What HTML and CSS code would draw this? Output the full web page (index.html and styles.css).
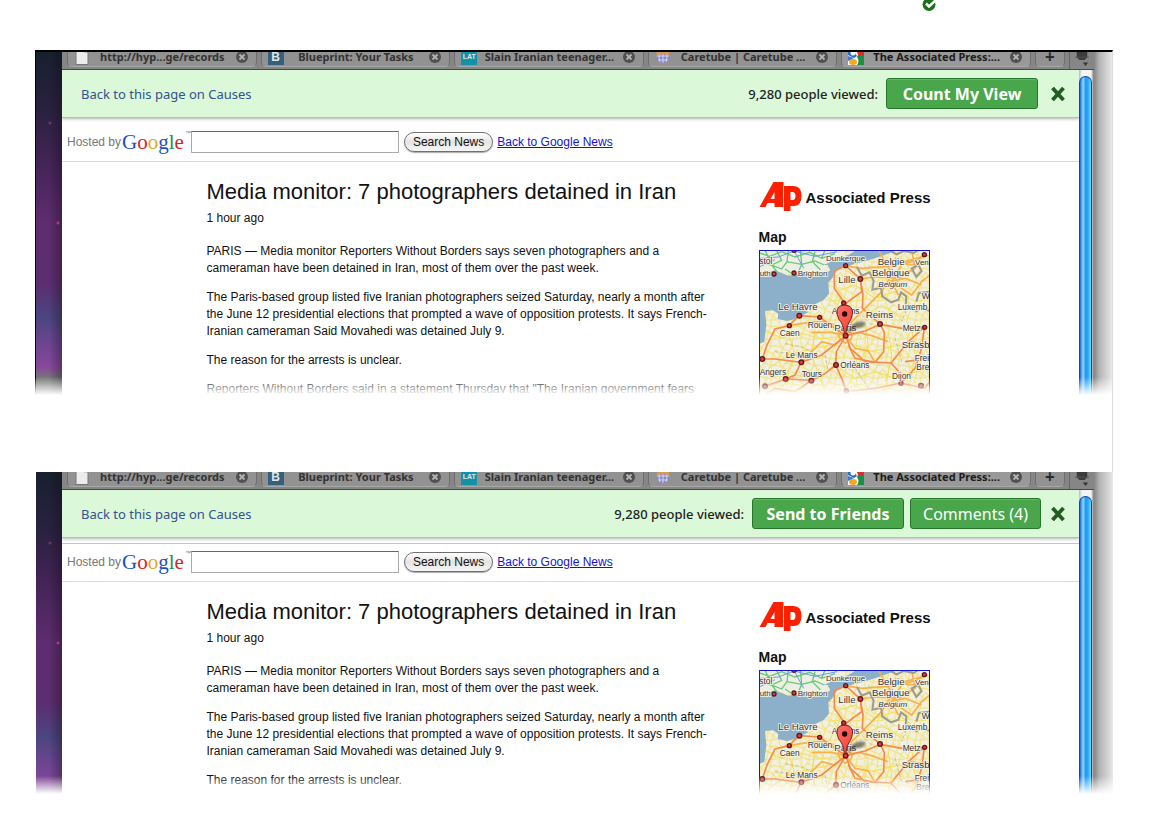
FILE: index.html
```
<!DOCTYPE html>
<html lang="en">
<head>
<meta charset="utf-8">
<title>Causes toolbar states</title>
<link rel="stylesheet" href="styles.css">
</head>
<body>
<svg class="defs" aria-hidden="true">
  <defs>
    <linearGradient id="pinfill" x1="0" y1="0" x2="1" y2="1"><stop offset="0" stop-color="#ff7068"/><stop offset="1" stop-color="#ee4238"/></linearGradient>
    <filter id="soft"><feGaussianBlur stdDeviation="3"/></filter>
    <pattern id="lanes" width="64" height="58" patternUnits="userSpaceOnUse">
      <path d="M0 12L18 20L30 4L48 14L64 12M18 20L12 44L0 50M12 44L34 52L64 50M34 52L38 30L18 20M38 30L54 36L64 24M54 36L48 58M48 0L48 14L38 30M30 0V4M0 24L12 44L8 58M34 52L30 58M8 0L18 20M54 36L64 50" fill="none" stroke="#f0e36c" stroke-width="3"/>
      <path d="M4 4L24 32L58 44M28 46L10 30" fill="none" stroke="#f7efa4" stroke-width="2"/>
    </pattern>
  </defs>
  <symbol id="close-tab" viewBox="0 0 14 14">
    <circle cx="7" cy="7" r="6" fill="#505050"/>
    <path d="M4.500 4.500L9.500 9.500M9.500 4.500L4.500 9.500" stroke="#b4b4b4" stroke-width="1.800"/>
  </symbol>
  <symbol id="doc" viewBox="0 0 16 16"><path d="M2 0H10L14 4V15.500H2Z" fill="#ececec" stroke="#777"/><path d="M10 0V4H14" fill="#ccc"/></symbol>
  <symbol id="globe" viewBox="0 0 16 16">
    <circle cx="8" cy="8" r="6.500" fill="#8488c8"/>
    <path d="M2 7H14M3 11H13M8 2V14M5 3Q3 8 5 13M11 3Q13 8 11 13" fill="none" stroke="#d4d4ec"/>
    <path d="M1.500 7Q8 3 14.500 7L14 3Q8 -2 2 3Z" fill="#d99a50"/><path d="M4 14Q8 16 12 14" stroke="#d08860" fill="none"/>
  </symbol>
  <symbol id="gnews" viewBox="0 0 16 16">
    <path d="M0 0H16V16H0Z" fill="#fff"/><path d="M8 0H16V6H10Z" fill="#d6312c"/><path d="M10 6H16V16H9Q12 12 9 8Z" fill="#1b8f48"/>
    <path d="M0 0H4L9 7L6 9L0 6Z" fill="#2f68cc"/><circle cx="5" cy="4" r="2.500" fill="#fff"/><ellipse cx="5" cy="13" rx="4" ry="3" fill="#f6a821"/><path d="M0 7L6 9L2 11L0 12Z" fill="#3c78d8"/>
  </symbol>
  <symbol id="winmenu" viewBox="0 0 16 18">
    <path d="M2 1H14V7L11 10H5L2 7Z" fill="#3c3c3c"/><path d="M0 7H16" stroke="#555"/><path d="M9 13H15L12 17Z" fill="#333"/>
  </symbol>
  <symbol id="cross" viewBox="0 0 14 14"><path d="M1.500 1L12.500 13M12.500 1L1.500 13" stroke="#245c22" stroke-width="3.800"/></symbol>
  <symbol id="ap" viewBox="0 0 42 30">
    <path d="M14 0H24V25H15V21H8L6 25H0Z" fill="#fa2000"/>
    <path d="M11 17L15 10V17Z" fill="#fff"/>
    <path d="M23 4H34Q42 4 42 14Q42 24 34 24H31V29H24V5Z" fill="#fa2000"/>
    <path d="M24 4V29" stroke="#fff" stroke-width=".7"/>
    <path d="M31 10H33Q36 10 36 14Q36 18 33 18H31Z" fill="#fff"/>
  </symbol>
  <symbol id="roads" viewBox="12 15 513 465">
    <path d="M12 15H525V480H12Z" fill="#f2efe4"/>
    <path d="M12 15H525V480H12Z" fill="url(#lanes)"/>
    <g fill="none" stroke="#f3df55" stroke-width="3">
      <path d="M20 250L80 280L130 262L200 282L272 272M60 440L120 390L190 400L240 360L300 400L360 380L420 400L520 370M40 370L100 330L180 310L230 300M300 300L350 320L430 300L520 310M240 140L300 120L360 160L420 140L470 180M330 210L380 180L440 220M250 440L300 420L350 450L400 430L480 450M100 260L120 330L90 400L110 470M180 250L170 330L210 440M400 260L410 330L390 440M470 250L480 330L460 440"/>
      <path d="M235 110L260 150L240 200M210 150L250 180L220 230M330 240L340 300L310 360"/>
    </g>
    <path d="M12 80L30 86L60 76L100 92L140 86L200 92L226 76L218 60L205 60L250 40L280 30L305 15H430L360 40L310 54L265 66L246 76L232 100L220 112L222 146L205 166L170 182L150 194L160 202L120 222L96 228L68 222L70 206L54 196L30 198L34 240L28 290L12 298Z" fill="#8cafca"/>
    <path d="M12 15H275L250 40L205 60L218 72L190 88L140 82L100 88L60 72L30 84L12 76Z" fill="#eeefe3"/>
    <path d="M14 24L44 34L80 20L120 36L164 22L200 40L240 26M30 15L50 60L80 72L96 50L140 58L180 48L208 60M64 15L80 46L50 60M100 15L96 50M136 15L140 58L130 82M180 20L172 50L196 74M14 52L50 60L66 80M90 72L108 84M210 15L200 40" fill="none" stroke="#67c978" stroke-width="4"/>
    <path d="M12 40L70 36L118 18L180 34L246 20M118 18L146 70M12 66L60 44M118 18L196 15" fill="none" stroke="#7396e8" stroke-width="3"/>
    <g fill="none" stroke="#f9b04c" stroke-width="5">
      <path d="M272 272L240 240L210 230L160 232L102 242M272 272L230 262L170 262M272 272L310 262L350 272L400 290M272 272L290 230L330 190L380 140L410 90M272 62L320 70L400 64L520 30M370 15L396 60L440 130L470 150L500 110L525 90M316 102L360 96L430 100L480 70L470 15M420 40L460 60L520 56M400 110L450 100L500 120M272 272L240 300L200 290L140 350M272 272L300 310L340 318L360 352M430 150L410 110L440 60L500 40"/>
      <path d="M250 260Q272 250 290 265Q296 282 272 294Q250 286 250 260"/>
    </g>
    <g fill="none" stroke="#f58a50" stroke-width="5">
      <path d="M272 272L282 240L274 174L320 140L316 102L272 62L238 78L238 130L266 170M316 102L324 150L322 190L376 238M272 272L330 258L376 238L440 250L508 247M376 238L388 262L386 320L360 352M272 272L286 310L330 350L408 354L450 400L438 414M272 272L244 320L242 360L210 386L170 406L92 402L30 424M272 272L200 330L138 352L60 342L22 342M102 242L132 212L194 216L240 250L272 272M102 242L60 252L36 300L22 342M138 352L120 390L92 402M242 360L260 400L274 440L360 430L438 414L508 430L525 410M408 354L460 290L508 247M508 247L500 310L480 370L438 414M12 460L60 430L120 440L170 406"/>
      <path d="M460 290L525 300M360 352L300 340L280 300M450 350L525 340"/>
    </g>
    <path d="M306 66L320 92L344 82L356 108L352 134L378 128L382 154L408 172L430 164L438 142L454 154L452 180L480 186L484 198L500 190L525 198M402 15L425 28L446 18L476 24L490 15M484 170L492 144L525 140M470 70L490 60L500 78L484 96Z" fill="none" stroke="#9b9b91" stroke-width="6"/>
    <path d="M90 296L140 306L170 320M210 330L220 380M320 210L360 250M340 60L360 90M420 280L440 350M60 320L130 330M300 370L340 430M460 180L440 230" fill="none" stroke="#a9a99b" stroke-width="2" stroke-dasharray="10 6"/>
    <g fill="#e6343c" stroke="#551c20" stroke-width="4">
      <circle cx="57" cy="87" r="6"/><circle cx="117" cy="84" r="6"/><circle cx="272" cy="62" r="6"/><circle cx="316" cy="102" r="7"/><circle cx="266" cy="174" r="6"/><circle cx="133" cy="212" r="7"/><circle cx="194" cy="217" r="6"/><circle cx="103" cy="242" r="6"/><circle cx="375" cy="237" r="7"/><circle cx="508" cy="29" r="6"/><circle cx="509" cy="247" r="6"/><circle cx="272" cy="272" r="7"/><circle cx="139" cy="352" r="7"/><circle cx="243" cy="360" r="7"/><circle cx="22" cy="342" r="7"/><circle cx="92" cy="402" r="7"/><circle cx="169" cy="407" r="7"/><circle cx="438" cy="415" r="6"/><circle cx="30" cy="424" r="7"/><circle cx="498" cy="422" r="7"/><circle cx="274" cy="438" r="6"/><circle cx="117" cy="16" r="6"/>
    </g>
  </symbol>
  <symbol id="pin" viewBox="12 15 513 465">
    <path d="M274 268L294 236Q320 222 332 234Q330 250 300 250Z" fill="#333" opacity=".6" filter="url(#soft)"/>
    <path d="M268 266Q266 238 251 222Q238 190 258 182Q270 178 282 183Q300 192 288 222Q274 240 272 266Z" fill="url(#pinfill)" stroke="#7c201c" stroke-width="3"/>
    <circle cx="269" cy="207" r="8" fill="#200"/>
  </symbol>
</svg>

<header class="status">
  <svg class="check" viewBox="0 0 14 12" role="img" aria-label="Done"><circle cx="7" cy="4.500" r="6.500" fill="#1a701c"/><path d="M4 3.500L7 6.500L14 0" fill="none" stroke="#fff" stroke-width="2.600"/></svg>
</header>

<main>
<section class="frame">
  <div class="scene scene-tall">
    <div class="wallpaper"></div>
    <div class="browser">
      <nav class="tabs">
        <div class="tab"><svg class="fav"><use href="#doc"/></svg><span class="tab-name">http://hyp...ge/records</span><svg class="shut"><use href="#close-tab"/></svg></div>
        <div class="tab"><span class="fav fav-b">B</span><span class="tab-name">Blueprint: Your Tasks</span><svg class="shut"><use href="#close-tab"/></svg></div>
        <div class="tab"><span class="fav fav-lat">LAT</span><span class="tab-name">Slain Iranian teenager...</span><svg class="shut"><use href="#close-tab"/></svg></div>
        <div class="tab"><svg class="fav"><use href="#globe"/></svg><span class="tab-name">Caretube | Caretube ...</span><svg class="shut"><use href="#close-tab"/></svg></div>
        <div class="tab tab-on"><svg class="fav"><use href="#gnews"/></svg><span class="tab-name">The Associated Press:...</span><svg class="shut"><use href="#close-tab"/></svg></div>
        <button class="tab tab-new" type="button">+</button>
        <div class="tab-menu"><svg><use href="#winmenu"/></svg></div>
      </nav>
      <div class="viewport">
        <div class="page">
          <div class="causes">
            <a class="causes-back" href="#">Back to this page on Causes</a>
            <p class="viewed">9,280 people viewed:</p>
            <button class="green strong" type="button">Count My View</button>
            <button class="dismiss" type="button" aria-label="Close"><svg><use href="#cross"/></svg></button>
          </div>
          <form class="search">
            <label class="hosted" for="q1"><span>Hosted by</span><span class="google"><span class="b">G</span><span class="r">o</span><span class="y">o</span><span class="b">g</span><span class="g">l</span><span class="r">e</span></span><small>™</small></label>
            <input class="query" id="q1" type="text">
            <button class="search-btn" type="button">Search News</button>
            <a href="#">Back to Google News</a>
          </form>
          <div class="story">
            <article>
              <h1>Media monitor: 7 photographers detained in Iran</h1>
              <p class="when">1 hour ago</p>
              <p>PARIS — Media monitor Reporters Without Borders says seven photographers and a cameraman have been detained in Iran, most of them over the past week.</p>
              <p>The Paris-based group listed five Iranian photographers seized Saturday, nearly a month after the June 12 presidential elections that prompted a wave of opposition protests. It says French-Iranian cameraman Said Movahedi was detained July 9.</p>
              <p>The reason for the arrests is unclear.</p>
              <p>Reporters Without Borders said in a statement Thursday that "The Iranian government fears</p>
            </article>
            <aside>
              <div class="ap"><svg class="ap-mark"><use href="#ap"/></svg><span>Associated Press</span></div>
              <h2>Map</h2>
              <svg class="map" viewBox="12 15 513 465" role="img" aria-label="Map of northern France">
                <use href="#roads" x="12" y="15" width="513" height="465"/>
                <g class="places">
                  <text class="m" x="13" y="56">stol</text><text class="s" x="14" y="94">uth</text><text class="s" x="128" y="93">Brighton</text><text class="s" x="213" y="49">Dunkerque</text><text class="l" x="368" y="61">Belgie</text><text class="s" x="480" y="60">Ven</text><text class="l" x="351" y="92">Belgique</text><text class="s i" x="370" y="126">Belgium</text><text class="l" x="250" y="113">Lille</text><text class="l" x="70" y="196">Le Havre</text><text class="m" x="230" y="206">Amiens</text><text class="m" x="428" y="196">Luxemb</text><text class="m" x="500" y="162">W</text><text class="l" x="332" y="220">Reims</text><text class="m" x="158" y="248">Rouen</text><text class="l" x="238" y="257">Paris</text><text class="m" x="74" y="273">Caen</text><text class="m" x="443" y="257">Metz</text><text class="l" x="440" y="308">Strasb</text><text class="m" x="92" y="340">Le Mans</text><text class="m" x="256" y="369">Orléans</text><text class="m" x="479" y="348">Frei</text><text class="m" x="484" y="375">Bre</text><text class="m" x="14" y="390">Angers</text><text class="m" x="140" y="396">Tours</text><text class="m" x="411" y="403">Dijon</text>
                </g>
                <use href="#pin" x="12" y="15" width="513" height="465"/>
              </svg>
            </aside>
          </div>
        </div>
        <div class="scroll"><div class="thumb"></div></div>
      </div>
    </div>
    <div class="edge"></div>
  </div>
</section>

<section class="frame frame-plain">
  <div class="scene">
    <div class="wallpaper"></div>
    <div class="browser">
      <nav class="tabs">
        <div class="tab"><svg class="fav"><use href="#doc"/></svg><span class="tab-name">http://hyp...ge/records</span><svg class="shut"><use href="#close-tab"/></svg></div>
        <div class="tab"><span class="fav fav-b">B</span><span class="tab-name">Blueprint: Your Tasks</span><svg class="shut"><use href="#close-tab"/></svg></div>
        <div class="tab"><span class="fav fav-lat">LAT</span><span class="tab-name">Slain Iranian teenager...</span><svg class="shut"><use href="#close-tab"/></svg></div>
        <div class="tab"><svg class="fav"><use href="#globe"/></svg><span class="tab-name">Caretube | Caretube ...</span><svg class="shut"><use href="#close-tab"/></svg></div>
        <div class="tab tab-on"><svg class="fav"><use href="#gnews"/></svg><span class="tab-name">The Associated Press:...</span><svg class="shut"><use href="#close-tab"/></svg></div>
        <button class="tab tab-new" type="button">+</button>
        <div class="tab-menu"><svg><use href="#winmenu"/></svg></div>
      </nav>
      <div class="viewport">
        <div class="page">
          <div class="causes">
            <a class="causes-back" href="#">Back to this page on Causes</a>
            <p class="viewed">9,280 people viewed:</p>
            <button class="green strong" type="button">Send to Friends</button>
            <button class="green" type="button">Comments (4)</button>
            <button class="dismiss dismiss-near" type="button" aria-label="Close"><svg><use href="#cross"/></svg></button>
          </div>
          <form class="search search-ruled">
            <label class="hosted" for="q2"><span>Hosted by</span><span class="google"><span class="b">G</span><span class="r">o</span><span class="y">o</span><span class="b">g</span><span class="g">l</span><span class="r">e</span></span><small>™</small></label>
            <input class="query" id="q2" type="text">
            <button class="search-btn" type="button">Search News</button>
            <a href="#">Back to Google News</a>
          </form>
          <div class="story">
            <article>
              <h1>Media monitor: 7 photographers detained in Iran</h1>
              <p class="when">1 hour ago</p>
              <p>PARIS — Media monitor Reporters Without Borders says seven photographers and a cameraman have been detained in Iran, most of them over the past week.</p>
              <p>The Paris-based group listed five Iranian photographers seized Saturday, nearly a month after the June 12 presidential elections that prompted a wave of opposition protests. It says French-Iranian cameraman Said Movahedi was detained July 9.</p>
              <p>The reason for the arrests is unclear.</p>
            </article>
            <aside>
              <div class="ap"><svg class="ap-mark"><use href="#ap"/></svg><span>Associated Press</span></div>
              <h2>Map</h2>
              <svg class="map" viewBox="12 15 513 465" role="img" aria-label="Map of northern France">
                <use href="#roads" x="12" y="15" width="513" height="465"/>
                <g class="places">
                  <text class="m" x="13" y="56">stol</text><text class="s" x="14" y="94">uth</text><text class="s" x="128" y="93">Brighton</text><text class="s" x="213" y="49">Dunkerque</text><text class="l" x="368" y="61">Belgie</text><text class="s" x="480" y="60">Ven</text><text class="l" x="351" y="92">Belgique</text><text class="s i" x="370" y="126">Belgium</text><text class="l" x="250" y="113">Lille</text><text class="l" x="70" y="196">Le Havre</text><text class="m" x="230" y="206">Amiens</text><text class="m" x="428" y="196">Luxemb</text><text class="m" x="500" y="162">W</text><text class="l" x="332" y="220">Reims</text><text class="m" x="158" y="248">Rouen</text><text class="l" x="238" y="257">Paris</text><text class="m" x="74" y="273">Caen</text><text class="m" x="443" y="257">Metz</text><text class="l" x="440" y="308">Strasb</text><text class="m" x="92" y="340">Le Mans</text><text class="m" x="256" y="369">Orléans</text><text class="m" x="479" y="348">Frei</text><text class="m" x="484" y="375">Bre</text>
                </g>
                <use href="#pin" x="12" y="15" width="513" height="465"/>
              </svg>
            </aside>
          </div>
        </div>
        <div class="scroll"><div class="thumb"></div></div>
      </div>
    </div>
    <div class="edge"></div>
  </div>
</section>
</main>
</body>
</html>
```

FILE: styles.css
```
* { box-sizing: border-box; }
body {
  margin: 0;
  background: #fff;
  color: #111;
  font-family: "Liberation Sans", Arial, sans-serif;
  font-size: 12px;
}
p, h1, h2 { margin: 0; font-weight: normal; }
button { font: inherit; padding: 0; border: 0; background: none; color: inherit; }
.defs { display: block; width: 0; height: 0; }

.status { display: flex; justify-content: flex-end; height: 50px; padding-right: 225px; }
.check { width: 14px; height: 12px; }

main { padding: 0 48px 32px 35px; }
.frame { border-top: 2px solid #000; border-right: 1px solid #ddd; padding-bottom: 77px; }
.frame .scene-tall .wallpaper { border-left: 1px solid #000; width: 27px; }
.frame-plain { border: 0; padding: 0; margin-left: 1px; }

.scene { position: relative; display: flex; height: 322px; overflow: hidden; }
.scene-tall { height: 343px; }
.scene::after {
  content: "";
  position: absolute;
  left: 0; right: 0; bottom: 0;
  height: 18px;
  background: linear-gradient(rgba(255,255,255,0), #fff);
}
.wallpaper {
  flex: none;
  width: 26px;
  background:
    radial-gradient(circle at 14px 71px, #74305c 0 1px, transparent 2px),
    radial-gradient(circle at 22px 171px, #a8405c 0 1px, transparent 2px),
    linear-gradient(90deg, transparent 50%, rgba(20,10,20,.35)),
    linear-gradient(#17202f, #2a2140 60px, #432456 110px, #5e2c70 170px, #5c2d70 230px, #4b4580 265px, #6b4590 290px, #86489c 315px, #777 326px);
}
.frame-plain .wallpaper { background-size: auto, auto, auto, 100% 343px; }
.browser { flex: 1; min-width: 0; display: flex; flex-direction: column; }
.edge { flex: none; width: 18px; background: linear-gradient(90deg, #858585, #b5b5b5 30%, #dcdcdc 85%, #eaeaea); }
.frame-plain .edge { width: 19px; }

.tabs {
  flex: none;
  display: flex;
  align-items: flex-end;
  gap: 4px;
  height: 18px;
  padding-left: 5px;
  overflow: hidden;
  background: #868686;
  border-bottom: 1px solid #484848;
  font-family: "Noto Sans", "Open Sans", sans-serif;
  font-size: 11px;
  line-height: 12px;
  font-weight: bold;
  color: #333;
}
.tab {
  flex: 1 1 0;
  min-width: 0;
  display: flex;
  align-items: center;
  height: 20px;
  margin-bottom: 2px;
  padding: 0 7px 0 6px;
  border: 1px solid #6e6e6e;
  border-bottom-color: #a8a8a8;
  border-radius: 5px;
  background: #929292;
}
.tab-on { background: #999; color: #1c1c1c; }
.fav { flex: none; width: 16px; height: 16px; }
.fav-b, .fav-lat { background: #34607e; color: #e4e4e4; font: bold 12px/16px "Liberation Sans", sans-serif; text-align: center; }
.fav-lat { background: #1391a6; font-size: 7px; }
.tab-name { flex: 1; min-width: 0; white-space: nowrap; text-align: center; }
.shut { flex: none; width: 14px; height: 14px; }
.tab-new { flex: none; width: 30px; justify-content: center; font-size: 17px; padding: 0; color: #2a2a2a; }
.tab-menu { flex: none; display: flex; justify-content: center; width: 25px; height: 18px; border-left: 1px solid #666; }
.tab-menu svg { width: 14px; height: 16px; }

.viewport { flex: 1; min-height: 0; display: flex; }
.page { flex: 1; min-width: 0; overflow: hidden; background: #fff; }
.scroll {
  flex: none;
  width: 15px;
  padding-top: 6px;
  background: linear-gradient(90deg, #bbb, #f4f4f4 3px 12px, #777);
}
.thumb {
  height: 100%;
  margin-right: 2px;
  border: 1px solid #0d46b4;
  border-bottom: 0;
  border-radius: 7px 7px 0 0;
  background: linear-gradient(90deg, #1d62d8, #6bb8f2 2px, #8bd6fa 4px, #1f96f0 5px, #2da6f8 8px, #6ddcff 11px, #48b4f4);
}

.causes {
  display: flex;
  align-items: center;
  height: 48px;
  padding: 0 14px 0 19px;
  background: #dbf8d9;
  border-bottom: 1px solid #a0cda0;
  box-shadow: 0 1px 3px rgba(0,0,0,.3);
  font-family: "Noto Sans", "Open Sans", sans-serif;
  font-size: 13px;
}
.causes-back { margin-right: auto; color: #34528e; text-decoration: none; }
.viewed { margin-right: 2px; color: #222; font-weight: 500; }
.green {
  height: 31px;
  margin-left: 6px;
  padding: 0 12px;
  border: 1px solid #23762a;
  border-radius: 3px;
  background: #49a64b;
  box-shadow: inset 0 1px #65b867;
  color: #fff;
  font-size: 16px;
}
.strong { min-width: 152px; font-weight: bold; }
.dismiss { display: flex; margin-left: 13px; }
.dismiss-near { margin-left: 10px; }
.dismiss svg { width: 14px; height: 14px; }

.search {
  display: flex;
  align-items: center;
  height: 44px;
  padding: 4px 6px 0 5px;
  border-bottom: 1px solid #d5dbea;
}
.search-ruled { height: 39px; margin-top: 5px; padding-top: 0; padding-bottom: 1px; border-top: 1px solid #c6c6c6; }
.hosted { display: flex; align-items: center; gap: 1px; color: #777; white-space: nowrap; }
.google { font: 21px/24px "Liberation Serif", serif; }
.hosted small { align-self: flex-start; font-size: 6px; }
.b { color: #1a50c8; } .r { color: #d8222c; } .y { color: #e2a818; } .g { color: #22943c; }
.query { width: 208px; height: 22px; margin: 0 5px 0 0; border: 1px solid #aaa; border-top-color: #666; background: #fff; }
.search-btn {
  height: 20px;
  margin-right: 4px;
  padding: 0 8px;
  border: 1px solid #707070;
  border-radius: 10px;
  background: linear-gradient(#fff, #e4e4e4 50%, #f6f6f6);
  box-shadow: 0 1px 1px #aaa;
}
.search a { color: #1414d0; }

.story { display: flex; width: 100%; max-width: 728px; margin: 0 auto; padding-top: 18px; }
article { flex: 1; min-width: 0; padding-right: 50px; font-size: 12px; line-height: 17px; }
article p { margin-bottom: 12px; }
h1 { font-size: 22px; line-height: 24px; white-space: nowrap; }
article .when { margin: 6px 0 16px; }
aside { flex: none; width: 176px; }
.ap { display: flex; align-items: center; gap: 4px; height: 34px; white-space: nowrap; font-size: 15px; font-weight: bold; }
.ap-mark { flex: none; width: 43px; height: 30px; }
h2 { margin-top: 14px; font-size: 14px; line-height: 18px; font-weight: bold; }
.map { display: block; width: 171px; height: 155px; margin-top: 4px; outline: 1px solid #1414cc; outline-offset: -1px; }
.places { fill: #333; paint-order: stroke; stroke: #f6f4ea; stroke-width: 5px; }
.s { font-size: 24px; }
.m { font-size: 25px; }
.l { font-size: 29px; }
.i { font-style: italic; }
```
